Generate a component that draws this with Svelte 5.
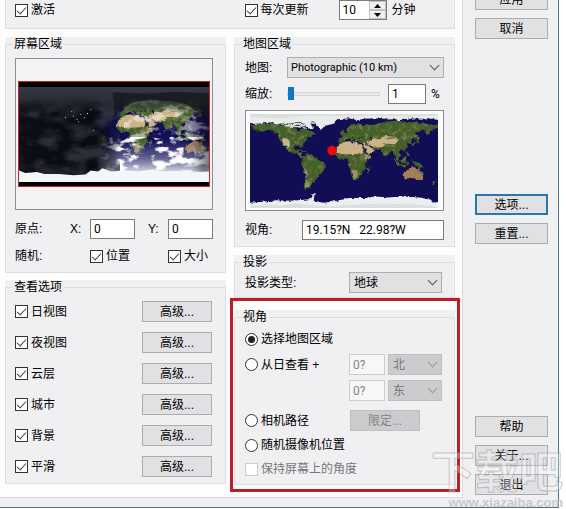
<script>
  let views = $state([
    { name: '日视图', on: true },
    { name: '夜视图', on: true },
    { name: '云层', on: true },
    { name: '城市', on: true },
    { name: '背景', on: true },
    { name: '平滑', on: true }
  ]);
  let minutes = $state(10);
  let mode = $state('area');
</script>

<main>
  <div class="dialog">
    <div class="panel">
      <div class="group top">
        <label class="tick"><input type="checkbox" checked />激活</label>
        <div class="every">
          <label class="tick"><input type="checkbox" checked />每次更新</label>
          <span class="spin">
            <input type="text" aria-label="分钟" bind:value={minutes} />
            <span class="arrows">
              <button aria-label="增加" onclick={() => minutes++}><svg viewBox="0 0 7 4"><path d="M0 4L3.500 0L7 4Z" /></svg></button>
              <button aria-label="减少" onclick={() => minutes--}><svg viewBox="0 0 7 4"><path d="M0 0L3.500 4L7 0Z" /></svg></button>
            </span>
          </span>
          <span class="unit">分钟</span>
        </div>
      </div>

      <div class="columns">
        <div class="column left">
          <div class="group">
            <fieldset>
              <legend>屏幕区域</legend>
              <div class="preview screen">
                <div class="frame">
                  <svg viewBox="0 0 360 180" role="img" aria-label="屏幕预览">
                    <defs>
                      <filter id="clouds" x="0" y="0" width="1" height="1" color-interpolation-filters="sRGB">
                        <feTurbulence type="fractalNoise" baseFrequency=".035 .06" numOctaves="5" seed="11" />
                        <feColorMatrix values="0 0 0 0 1  0 0 0 0 1  0 0 0 0 1  6 0 0 0 -2.900" />
                      </filter>
                      <filter id="haze" x="0" y="0" width="1" height="1" color-interpolation-filters="sRGB">
                        <feTurbulence type="fractalNoise" baseFrequency=".02 .035" numOctaves="4" seed="4" />
                        <feColorMatrix values="0 0 0 0 .2  0 0 0 0 .22  0 0 0 0 .27  3 0 0 0 -1.200" />
                      </filter>
                      <linearGradient id="night">
                        <stop offset="0" stop-color="#0c0e13" />
                        <stop offset=".4" stop-color="#090b10" stop-opacity=".98" />
                        <stop offset=".46" stop-color="#090b12" stop-opacity=".6" />
                        <stop offset=".53" stop-color="#090b12" stop-opacity="0" />
                        <stop offset=".9" stop-color="#090b12" stop-opacity="0" />
                        <stop offset="1" stop-color="#090b12" stop-opacity=".55" />
                      </linearGradient>
                      <linearGradient id="polar" x2="0" y2="1">
                        <stop offset="0" stop-color="#333842" />
                        <stop offset=".12" stop-color="#2a2f38" stop-opacity=".95" />
                        <stop offset=".27" stop-color="#20242b" stop-opacity="0" />
                      </linearGradient>
                      <linearGradient id="south" x2="0" y2="1">
                        <stop offset="0" stop-color="#b9bfd4" stop-opacity="0" />
                        <stop offset=".5" stop-color="#b9bfd4" stop-opacity=".45" />
                        <stop offset="1" stop-color="#fff" stop-opacity=".95" />
                      </linearGradient>
                    </defs>
                    <use href="#earth" x="22" />
                    <use href="#earth" x="-338" />
                    <rect x="150" y="100" width="210" height="66" fill="url(#south)" />
                    <rect x="150" y="95" width="210" height="75" filter="url(#clouds)" />
                    <rect x="200" y="24" width="160" height="80" filter="url(#clouds)" opacity=".5" />
                    <rect width="360" height="180" fill="url(#night)" />
                    <rect width="190" height="180" filter="url(#haze)" opacity=".8" />
                    <rect width="360" height="180" fill="url(#polar)" />
                    <path d="M177 10L240 13L300 9L360 12V60L338 48L318 33L290 27L250 24L222 28L205 34L190 46L180 58V30Z" fill="#14171d" opacity=".75" />
                    <path d="M0 158L12 163L34 161L48 165L75 165L104 167L126 166L136 158L150 160L158 154L175 160L200 158L226 160L254 157L263 160L300 159L325 162L360 160V180H0Z" fill="#f5f6f9" />
                    <g fill="#dfe3ee">
                      <circle cx="103" cy="55" r="1" /><circle cx="110" cy="61" r="1" /><circle cx="117" cy="52" r="1" /><circle cx="124" cy="58" r="1" /><circle cx="113" cy="66" r="1" /><circle cx="130" cy="50" r="1" /><circle cx="136" cy="43" r="1" /><circle cx="88" cy="58" r="1" /><circle cx="100" cy="46" r="1" /><circle cx="141" cy="82" r="1" />
                    </g>
                  </svg>
                </div>
              </div>
              <div class="row origin">
                <span class="name">原点:</span>
                <label for="ox">X:</label><input id="ox" type="text" value="0" />
                <label for="oy">Y:</label><input id="oy" type="text" value="0" />
              </div>
              <div class="row random">
                <span class="name">随机:</span>
                <label class="tick"><input type="checkbox" checked />位置</label>
                <label class="tick"><input type="checkbox" checked />大小</label>
              </div>
            </fieldset>
          </div>

          <div class="group">
            <fieldset class="views">
              <legend>查看选项</legend>
              {#each views as view}
                <div class="row between">
                  <label class="tick"><input type="checkbox" bind:checked={view.on} />{view.name}</label>
                  <button class="btn">高级...</button>
                </div>
              {/each}
            </fieldset>
          </div>
        </div>

        <div class="column right">
          <div class="group">
            <fieldset class="map">
              <legend>地图区域</legend>
              <div class="row">
                <label class="key" for="map">地图:</label>
                <span class="drop grow"><select id="map"><option>Photographic (10 km)</option></select></span>
              </div>
              <div class="row zoom">
                <label class="key" for="zoom">缩放:</label>
                <input id="zoom" type="range" min="0" max="100" value="0" />
                <input class="amount" type="text" aria-label="缩放百分比" value="1" />
                <span class="percent">%</span>
              </div>
              <div class="preview world">
                <svg viewBox="0 0 360 180" role="img" aria-label="世界地图">
                  <defs>
                    <filter id="grain" x="0" y="0" width="1" height="1" color-interpolation-filters="sRGB">
                      <feTurbulence type="fractalNoise" baseFrequency=".1" numOctaves="3" seed="7" result="n" />
                      <feColorMatrix in="n" values="0 0 0 0 .5  0 0 0 0 .5  0 0 0 0 .32  3 0 0 0 -1.500" result="m" />
                      <feComposite in="m" in2="SourceAlpha" operator="in" result="p" />
                      <feMerge><feMergeNode in="SourceGraphic" /><feMergeNode in="p" /></feMerge>
                    </filter>
                    <filter id="rough" x="0" y="0" width="1" height="1" color-interpolation-filters="sRGB">
                      <feTurbulence type="fractalNoise" baseFrequency=".14" numOctaves="2" seed="3" />
                      <feDisplacementMap in="SourceGraphic" scale="7" xChannelSelector="R" yChannelSelector="G" />
                    </filter>
                    <symbol id="earth" viewBox="0 0 360 180" width="360" height="180">
                      <rect width="360" height="180" fill="#120e56" />
                      <g filter="url(#rough)">
                        <rect width="360" height="180" fill="#120e56" />
                        <g fill="#436029" stroke="#436029" stroke-width="2" filter="url(#grain)">
                          <path d="M3 25L14 20L24 19L40 20L52 21L65 22L80 22L86 21L86 27L88 31L98 35L100 28L103 28L108 32L115 32L124 38L120 41L114 44L110 46L106 49L104 54L99 58L99 64L97 60L90 60L83 62L83 68L87 71L90 69L93 69L92 74L97 75L97 80L102 81L98 82L94 78L88 75L80 73L75 70L70 65L64 58L60 52L56 46L55 40L48 33L40 30L30 29L20 32L10 29Z" />
                          <path d="M102 82L108 78L118 80L128 85L130 90L140 93L145 97L141 104L139 112L132 115L128 122L122 128L118 131L115 138L112 143L106 143L104 135L107 125L109 110L104 105L99 96L100 90L103 86Z" />
                          <path d="M174 54L190 53L191 57L200 59L212 59L215 65L218 73L223 79L231 79L228 86L220 93L220 104L215 110L213 116L206 124L198 124L194 112L192 100L188 92L189 86L184 84L172 86L165 81L163 75L164 68L170 60Z" />
                          <path d="M171 53V47L178 47L178 42L188 37L188 34L184 31L195 21L208 19L220 23L225 22L240 21L250 18L262 16L285 13L295 17L320 17L340 20L359 22V26L350 28L343 35L337 38L337 31L330 31L316 35L321 42L315 46L309 48L306 55L303 50L301 52L302 60L296 68L288 69L286 72L289 79L284 83L279 77L284 89L278 80L276 72L271 68L265 75L260 82L257 81L253 69L247 65L237 65L240 68L234 74L225 77L219 68L215 60L216 54L208 53L206 49L211 49L222 48L217 43L208 45L206 50L203 53L200 46L192 45L198 50L196 52L190 46L183 47L180 50L175 54Z" />
                          <path d="M175 40L174 34L177 31L181 38ZM320 55L318 48L324 45L321 53L313 58L310 57ZM276 85L286 96L283 96ZM289 90L298 83L297 94L291 93ZM300 91L304 94L301 96ZM312 91L326 95L330 101L318 98ZM285 97L298 99L297 101ZM300 72L305 80L302 80ZM225 104L229 104L225 114ZM349 131L355 128L351 135ZM95 69L107 72Z" />
                        </g>
                        <path d="M173 55L190 52L212 58L218 72L215 76L190 77L163 76L163 68L170 60ZM216 55L225 60L232 65L239 68L234 74L226 76L219 68ZM225 52L235 47L250 46L260 42L280 44L286 48L278 58L263 57L253 63L240 64L228 59ZM66 46L75 48L77 61L72 66L64 57L61 49Z" fill="#ccb288" />
                        <path d="M194 108L202 106L208 112L205 122L198 124ZM219 76L231 78L227 87L221 89Z" fill="#a3906a" />
                        <path d="M294 112L302 107L310 102L316 102L320 107L323 101L326 108L333 116L331 124L325 129L318 125L308 122L298 124L295 121Z" fill="#a67f57" />
                        <path d="M104 105L110 108L109 125L115 137L110 142L105 138L107 125Z" fill="#94906c" />
                        <path d="M260 48L275 45L285 48M255 55L265 60L278 62M320 105L325 111L331 118" fill="none" stroke="#6b7448" stroke-width="3" />
                        <path d="M214 58L219 67L225 77M231 61L235 66" fill="none" stroke="#120e56" stroke-width="2" />
                        <path d="M229 44L234 46L233 53L230 50Z" fill="#120e56" />
                        <path d="M-4 -4H364V12L341 8L325 9L306 8L286 12L272 8L253 9L239 8L218 9L205 12L192 8L167 10L158 19L142 23L137 31L130 27L125 19L117 18L118 23L123 27L116 29L109 24L99 23L91 20L80 23L68 18L50 20L42 16L19 18L-4 20Z" fill="#e9ebed" />
                        <path d="M56 18L80 22L99 23L112 29L101 27L86 25L72 24Z" fill="#dfe5df" />
                        <path d="M58 17L76 19L92 16L104 20M118 14L126 17" fill="none" stroke="#57663f" stroke-width="2" />
                        <path d="M-4 170L28 168L50 165L78 166L104 164L117 163L120 153L124 154L122 166L140 170L169 166L189 161L224 161L240 158L264 160L290 158L324 160L347 164L350 170L364 168V184H-4Z" fill="#eceef0" />
                      </g>
                      <path d="M0 0H360V3L300 5L250 3L190 5L120 3L60 8L0 6ZM0 176L30 173L58 175L92 171L105 174L150 177L196 174L250 172L310 173L350 176L360 180H0Z" fill="#dcdfdf" />
                    </symbol>
                  </defs>
                  <use href="#earth" />
                  <circle cx="157" cy="70" r="9" fill="#f80505" stroke="#7b0b25" />
                </svg>
              </div>
              <div class="row place">
                <label class="key" for="place">视角:</label>
                <input id="place" type="text" value="19.15?N   22.98?W" />
              </div>
            </fieldset>
          </div>

          <div class="group">
            <fieldset class="projection">
              <legend>投影</legend>
              <div class="row between">
                <label for="kind">投影类型:</label>
                <span class="drop kind"><select id="kind"><option>地球</option></select></span>
              </div>
            </fieldset>
          </div>

          <div class="group marked">
            <fieldset class="angle">
              <legend>视角</legend>
              <div class="row"><label class="tick"><input type="radio" bind:group={mode} value="area" />选择地图区域</label></div>
              <div class="row between">
                <label class="tick"><input type="radio" bind:group={mode} value="sun" />从日查看 +</label>
                <span class="offset">
                  <input type="text" aria-label="纬度偏移" value="0?" disabled />
                  <span class="drop"><select aria-label="南北" disabled><option>北</option></select></span>
                </span>
              </div>
              <div class="row end">
                <span class="offset">
                  <input type="text" aria-label="经度偏移" value="0?" disabled />
                  <span class="drop"><select aria-label="东西" disabled><option>东</option></select></span>
                </span>
              </div>
              <div class="row between path">
                <label class="tick"><input type="radio" bind:group={mode} value="path" />相机路径</label>
                <button class="btn" disabled>限定...</button>
              </div>
              <div class="row"><label class="tick"><input type="radio" bind:group={mode} value="random" />随机摄像机位置</label></div>
              <div class="row"><label class="tick off"><input type="checkbox" disabled />保持屏幕上的角度</label></div>
            </fieldset>
          </div>
        </div>
      </div>
    </div>

    <div class="side">
      <div class="stack"><button class="btn">应用</button><button class="btn">取消</button></div>
      <div class="stack"><button class="btn focus">选项...</button><button class="btn">重置...</button></div>
      <div class="stack"><button class="btn">帮助</button><button class="btn">关于...</button><button class="btn">退出</button></div>
    </div>
  </div>
  <div class="mark"><b>下载吧</b><span>www.xiazaiba.com</span></div>
</main>

<style>
  :global(body) { margin: 0; background: #fff; }
  main, main * { box-sizing: border-box; }
  main {
    position: relative;
    overflow: hidden;
    font: 12px/14px "Liberation Sans", "Noto Sans CJK SC", sans-serif;
    color: #000;
  }
  input, select, button { font: inherit; color: inherit; margin: 0; border-radius: 0; }
  .dialog {
    display: flex;
    margin-right: 7px;
    background: #f0eff1;
    border-right: 1px solid #44789c;
    border-bottom: 1px solid #44789c;
    padding-bottom: 9px;
  }
  .panel {
    flex: 1;
    min-width: 0;
    padding: 0 7px 12px 5px;
    background: #fdfdfe;
    border-right: 1px solid #d9d9dc;
    border-bottom: 1px solid #d9d9dc;
  }
  .group { background: #f0eff1; }
  .top {
    display: grid;
    grid-template-columns: 1fr 1fr;
    column-gap: 8px;
    height: 29px;
    padding: 0 0 12px 9px;
    border: solid #dddde0;
    border-width: 0 1px 1px;
  }
  .every { display: flex; align-items: center; padding-left: 6px; }
  .spin { display: flex; flex: none; width: 48px; height: 20px; margin: 0 5px 0 30px; border: 1px solid #7a7a7a; background: #fff; }
  .spin input { width: 29px; flex: none; }
  .arrows { display: flex; flex-direction: column; flex: 1; }
  .arrows button { flex: 1; display: flex; align-items: center; justify-content: center; padding: 0; border: 1px solid #c2c2c4; background: #f0eff1; min-height: 0; }
  .arrows svg { width: 7px; height: 4px; }
  .unit { white-space: nowrap; }

  .columns { display: grid; grid-template-columns: 1fr 1fr; gap: 8px; padding-top: 8px; }
  .column { display: flex; flex-direction: column; gap: 7px; min-width: 0; }
  .right { gap: 8px; }
  fieldset {
    display: flex;
    flex-direction: column;
    min-width: 0;
    margin: 0;
    padding: 7px 10px 6px;
    border: 1px solid #dddde0;
  }
  .left fieldset { padding-left: 9px; padding-right: 12px; }
  legend { margin-left: -2px; padding: 0 2px 0 1px; line-height: 14px; }
  .right legend { margin-left: -3px; }
  .row { display: flex; align-items: center; min-height: 20px; }
  .between { justify-content: space-between; }
  .end { justify-content: flex-end; }

  .tick { display: flex; align-items: center; gap: 3px; white-space: nowrap; }
  .tick input { appearance: none; flex: none; position: relative; width: 13px; height: 13px; border: 1px solid #333; background: #fff; }
  .tick input[type="checkbox"]:checked::after {
    content: "";
    position: absolute;
    left: 3px;
    top: 0;
    width: 4px;
    height: 8px;
    border: solid #444;
    border-width: 0 1px 1px 0;
    transform: rotate(42deg);
  }
  .tick input[type="radio"] { border-radius: 50%; }
  .tick input[type="radio"]:checked::after { content: ""; position: absolute; inset: 2px; border-radius: 50%; background: #222; }
  .tick input:disabled { border-color: #ccc; }
  .off { color: #77777a; }

  input[type="text"] { min-width: 0; height: 20px; padding: 0 3px; border: 1px solid #7a7a7a; background: #fff; outline: 0; font-family: Roboto, sans-serif; }
  .spin input[type="text"] { border: 0; height: 18px; }
  input[type="text"]:disabled { border-color: #ccc; background: #f7f7f8; color: #838386; }

  .btn { width: 70px; height: 21px; padding: 0; border: 1px solid #adadb0; background: #e1e0e3; text-align: center; white-space: nowrap; }
  .btn:disabled { background: #ccccce; border-color: #bfbfc1; color: #838386; }

  .drop { position: relative; display: block; }
  .drop select { appearance: none; display: block; width: 100%; height: 21px; padding: 0 18px 0 4px; border: 1px solid #adadb0; background: #e1e0e3; }
  .drop #map { font-family: Roboto, sans-serif; font-size: 11px; padding-left: 3px; }
  .drop::after {
    content: "";
    position: absolute;
    right: 6px;
    top: 5px;
    width: 6px;
    height: 6px;
    border: solid #555;
    border-width: 0 1px 1px 0;
    transform: rotate(45deg);
    pointer-events: none;
  }
  .drop select:disabled { background: #ccccce; border-color: #bfbfc1; color: #77777a; opacity: 1; }
  .drop:has(:disabled)::after { border-color: #999; }
  .grow { flex: 1; }

  .preview { border: 1px solid #8d8d90; background: #fdfdfe; }
  .preview svg { display: block; width: 100%; height: auto; }
  .screen { display: flex; align-items: center; min-height: 152px; padding: 0 2px; background: #f3f3f5; }
  .frame { flex: 1; border: 1px solid #c4232c; background: #000; padding: 5px 0 4px; }
  .world { padding: 3px 5px 2px 4px; }

  .name { flex: 1; }
  .origin { margin-top: 9px; }
  .origin label { width: 20px; }
  .origin input { width: 45px; }
  .origin input + label { margin-left: 13px; }
  .random { margin-top: 7px; }
  .random .tick { width: 45px; }
  .random .tick + .tick { margin-left: 33px; }

  .left .views { gap: 10px; padding-right: 13px; }
  .key { width: 42px; flex: none; }
  .map { padding-top: 6px; }
  .zoom { margin: 6px 0; }
  .zoom input[type="range"] { appearance: none; flex: 1; min-width: 0; height: 14px; background: none; }
  .zoom input[type="range"]::-webkit-slider-runnable-track { height: 4px; border: 1px solid #d6d6d9; background: #e7e7ea; }
  .zoom input[type="range"]::-webkit-slider-thumb { appearance: none; width: 6px; height: 13px; margin-top: -6px; background: #1477bd; }
  .amount { width: 38px; margin-left: 8px; }
  .percent { width: 13px; margin-left: 5px; font-family: Roboto, sans-serif; }
  .place { margin-top: 9px; }
  .place .key { width: 57px; }
  .place input { flex: 1; white-space: pre; }
  .projection { padding-top: 3px; padding-bottom: 4px; }
  .kind { width: 93px; margin-right: 2px; }

  .marked { position: relative; margin-top: 4px; }
  .marked::after {
    content: "";
    position: absolute;
    inset: -12px -5px -7px -4px;
    border: 3px solid #bd1e25;
    pointer-events: none;
  }
  .angle { gap: 5px; padding-top: 5px; padding-bottom: 5px; }
  .angle .path { margin-top: 4px; }
  .angle .path .btn { margin-right: 24px; }
  .angle .path ~ .row { margin-top: -1px; }
  .offset { display: flex; gap: 3px; margin-right: 2px; }
  .offset input { width: 36px; height: 21px; }
  .offset .drop { width: 54px; }

  .side { display: flex; flex-direction: column; flex: none; width: 95px; padding: 0 10px 0 12px; margin-top: -11px; }
  .stack { display: flex; flex-direction: column; gap: 8px; }
  .stack + .stack { margin-top: 155px; }
  .stack:last-child { margin-top: 172px; }
  .side .btn { width: 100%; }
  .side .focus { border: 2px solid #2878ac; }

  .mark {
    position: absolute;
    right: 3px;
    bottom: -2px;
    display: flex;
    flex-direction: column;
    align-items: flex-end;
    pointer-events: none;
    color: rgba(255, 255, 255, .3);
    -webkit-text-stroke: 1px rgba(150, 150, 155, .5);
  }
  .mark b { font-size: 44px; line-height: 46px; }
  .mark span { font-size: 13px; line-height: 14px; font-weight: bold; color: #c9c9cc; -webkit-text-stroke: 0; }
</style>
